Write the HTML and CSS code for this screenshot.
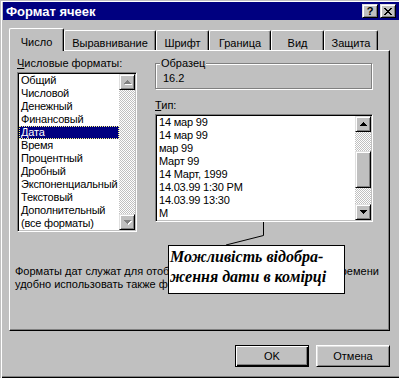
FILE: index.html
```html
<!DOCTYPE html>
<html lang="ru">
<head>
    <meta charset="UTF-8">
    <title>Формат ячеек</title>
    <link rel="stylesheet" href="styles.css">
</head>
<body>
    <div class="dialog">
        <div class="titlebar">
            <span class="title">Формат ячеек</span>
            <div class="title-buttons">
                <span class="title-btn help">?</span>
                <span class="title-btn">
                    <svg width="8" height="7" viewBox="0 0 8 7"><path d="M0 0h2v1h-2z M6 0h2v1h-2z M1 1h2v1h-2z M5 1h2v1h-2z M2 2h4v1h-4z M3 3h2v1h-2z M2 4h4v1h-4z M1 5h2v1h-2z M5 5h2v1h-2z M0 6h2v1h-2z M6 6h2v1h-2z"/></svg>
                </span>
            </div>
        </div>

        <div class="tabs">
            <div class="tab tab-number active">Число</div>
            <div class="tab tab-align">Выравнивание</div>
            <div class="tab tab-font">Шрифт</div>
            <div class="tab tab-border">Граница</div>
            <div class="tab tab-view">Вид</div>
            <div class="tab tab-protect">Защита</div>
        </div>

        <div class="panel">
            <div class="cols">
                <div class="col-left">
                    <div class="label"><u>Ч</u>исловые форматы:</div>
                    <div class="listbox formats">
                        <ul class="items">
                            <li>Общий</li>
                            <li>Числовой</li>
                            <li>Денежный</li>
                            <li>Финансовый</li>
                            <li class="sel">Дата</li>
                            <li>Время</li>
                            <li>Процентный</li>
                            <li>Дробный</li>
                            <li>Экспоненциальный</li>
                            <li>Текстовый</li>
                            <li>Дополнительный</li>
                            <li>(все форматы)</li>
                        </ul>
                        <div class="scrollbar disabled">
                            <div class="sb-btn"><svg width="7" height="4" viewBox="0 0 7 4"><path d="M3 0h1v1h-1z M2 1h3v1h-3z M1 2h5v1h-5z M0 3h7v1h-7z"/></svg></div>
                            <div class="sb-track"></div>
                            <div class="sb-btn"><svg width="7" height="4" viewBox="0 0 7 4"><path d="M0 0h7v1h-7z M1 1h5v1h-5z M2 2h3v1h-3z M3 3h1v1h-1z"/></svg></div>
                        </div>
                    </div>
                </div>

                <div class="col-right">
                    <fieldset class="sample">
                        <legend>Образец</legend>
                        <div class="sample-value">16.2</div>
                    </fieldset>
                    <div class="label"><u>Т</u>ип:</div>
                    <div class="listbox types">
                        <ul class="items">
                            <li>14 мар 99</li>
                            <li>14 мар 99</li>
                            <li>мар 99</li>
                            <li>Март 99</li>
                            <li>14 Март, 1999</li>
                            <li>14.03.99 1:30 PM</li>
                            <li>14.03.99 13:30</li>
                            <li>М</li>
                        </ul>
                        <div class="scrollbar">
                            <div class="sb-btn"><svg width="7" height="4" viewBox="0 0 7 4"><path d="M3 0h1v1h-1z M2 1h3v1h-3z M1 2h5v1h-5z M0 3h7v1h-7z"/></svg></div>
                            <div class="sb-track"><div class="sb-thumb"></div></div>
                            <div class="sb-btn"><svg width="7" height="4" viewBox="0 0 7 4"><path d="M0 0h7v1h-7z M1 1h5v1h-5z M2 2h3v1h-3z M3 3h1v1h-1z"/></svg></div>
                        </div>
                    </div>
                </div>
            </div>

            <p class="desc">Форматы дат служат для отображения даты и времени, а для времени<br>удобно использовать также форматы категории Время.</p>
        </div>

        <div class="buttons">
            <button class="btn default">OK</button>
            <button class="btn">Отмена</button>
        </div>

        <!-- выноска поверх диалога -->
        <svg class="leader" width="399" height="378">
            <polyline points="263.5,222 263.5,235.5 226,245" fill="none" stroke="#000" stroke-width="1"/>
        </svg>
        <div class="callout">Можливість відобра-<br>ження дати в комірці</div>
    </div>
</body>
</html>
```

FILE: styles.css
```css
/* Диалог "Формат ячеек" в стиле Windows 98 */
body {
    margin: 0;
    background-color: #c0c0c0;
    font-family: "Liberation Sans", Arial, sans-serif;
    font-size: 11px;
    line-height: 13px;
    color: #000;
}

.dialog {
    position: relative;
    width: 399px;
    height: 378px;
    box-sizing: border-box;
    padding: 2px 0 0 3px;
    background-color: #c0c0c0;
    box-shadow: inset 1px 1px 0 #c0c0c0, inset 2px 2px 0 #fff,
                inset 0 -1px 0 #000, inset 0 -2px 0 #808080;
    overflow: hidden;
}

/* заголовок */
.titlebar {
    height: 18px;
    background-color: #000080;
    color: #fff;
    display: flex;
    align-items: center;
    justify-content: space-between;
    padding: 0 3px 0 3px;
}

.title {
    font-weight: bold;
    font-size: 13px;
}

.title-buttons {
    display: flex;
    gap: 2px;
}

.title-btn {
    width: 16px;
    height: 14px;
    box-sizing: border-box;
    display: flex;
    align-items: center;
    justify-content: center;
    background-color: #c0c0c0;
    color: #000;
    border: 1px solid;
    border-color: #dfdfdf #000 #000 #dfdfdf;
    box-shadow: inset 1px 1px 0 #fff, inset -1px -1px 0 #808080;
}

.title-btn.help {
    font-weight: bold;
    font-size: 11px;
}

/* вкладки */
.tabs {
    position: relative;
    z-index: 1;
    display: flex;
    align-items: flex-end;
    height: 22px;
    margin: 8px 0 0 6px;
}

.tab {
    height: 20px;
    box-sizing: border-box;
    padding-top: 6px;
    text-align: center;
    border: 1px solid #fff;
    border-right-color: #000;
    border-bottom: none;
    border-radius: 2px 2px 0 0;
    box-shadow: inset -1px 0 0 #808080;
    white-space: nowrap;
}

.tab.active {
    height: 23px;
    margin-bottom: -1px;
    padding-top: 7px;
    background-color: #c0c0c0;
}

.tab-number { width: 55px; }
.tab-align { width: 92px; }
.tab-font { width: 53px; }
.tab-border { width: 62px; }
.tab-view { width: 53px; }
.tab-protect { width: 54px; }

.panel {
    width: 381px;
    height: 281px;
    box-sizing: border-box;
    margin-left: 6px;
    padding: 6px 0 0 7px;
    border: 1px solid;
    border-color: #fff #000 #000 #fff;
    box-shadow: inset -1px -1px 0 #808080;
}

.cols {
    display: flex;
    align-items: flex-start;
    gap: 18px;
}

.col-left {
    width: 120px;
}

.col-right {
    width: 218px;
}

.label {
    height: 13px;
    margin-bottom: 2px;
    white-space: nowrap;
}

/* группа "Образец" */
.sample {
    width: 217px;
    box-sizing: border-box;
    margin: 0 0 10px;
    padding: 2px 0 3px 7px;
    border: 1px solid #808080;
    box-shadow: inset 1px 1px 0 #fff, 1px 1px 0 #fff;
}

.sample legend {
    margin-left: -3px;
    padding: 0 1px;
    background-color: #c0c0c0;
    line-height: 13px;
}

.sample-value {
    height: 13px;
}

/* списки */
.listbox {
    display: flex;
    box-sizing: border-box;
    padding: 1px;
    background-color: #fff;
    border: 1px solid;
    border-color: #808080 #fff #fff #808080;
    box-shadow: inset 1px 1px 0 #000, inset -1px -1px 0 #c0c0c0;
}

.listbox.formats {
    height: 160px;
}

.listbox.types {
    height: 108px;
}

.items {
    flex: 1;
    margin: 0;
    padding: 0;
    list-style: none;
    overflow: hidden;
}

.items li {
    height: 13px;
    padding-left: 2px;
    letter-spacing: -0.2px;
    white-space: nowrap;
}

.items li.sel {
    background-color: #000080;
    color: #fff;
    outline: 1px dotted #ffff80;
    outline-offset: -1px;
}

.scrollbar {
    width: 16px;
    display: flex;
    flex-direction: column;
}

.sb-btn,
.sb-thumb {
    box-sizing: border-box;
    background-color: #c0c0c0;
    border: 1px solid;
    border-color: #dfdfdf #000 #000 #dfdfdf;
    box-shadow: inset 1px 1px 0 #fff, inset -1px -1px 0 #808080;
}

.sb-btn {
    height: 16px;
    display: flex;
    align-items: center;
    justify-content: center;
}

.sb-btn svg {
    fill: #000;
}

.scrollbar.disabled .sb-btn svg {
    fill: #808080;
    filter: drop-shadow(1px 1px 0 #fff);
}

.sb-track {
    flex: 1;
    padding-top: 19px;
    background-color: #fff;
    background-image: conic-gradient(#c0c0c0 25%, #fff 0 50%, #c0c0c0 0 75%, #fff 0);
    background-size: 2px 2px;
}

.sb-thumb {
    height: 37px;
}

.desc {
    margin: 33px 0 0 -2px;
    white-space: nowrap;
}

/* кнопки */
.buttons {
    display: flex;
    justify-content: flex-end;
    gap: 7px;
    width: 381px;
    margin: 14px 0 0 6px;
}

.btn {
    width: 74px;
    height: 22px;
    box-sizing: border-box;
    padding: 0;
    font-family: inherit;
    font-size: 11px;
    color: #000;
    background-color: #c0c0c0;
    border: 1px solid;
    border-color: #fff #000 #000 #fff;
    box-shadow: inset 1px 1px 0 #dfdfdf, inset -1px -1px 0 #808080;
}

.btn.default {
    border-color: #000;
    box-shadow: inset 1px 1px 0 #fff, inset -1px -1px 0 #000, inset -2px -2px 0 #808080;
}

/* выноска */
.leader {
    position: absolute;
    left: 0;
    top: 0;
    pointer-events: none;
}

.callout {
    position: absolute;
    left: 168px;
    top: 245px;
    width: 177px;
    height: 49px;
    box-sizing: border-box;
    padding: 1px 0 0 1px;
    background-color: #fff;
    border: 1px solid #000;
    font-family: "Liberation Serif", "Times New Roman", serif;
    font-weight: bold;
    font-style: italic;
    font-size: 16px;
    line-height: 20px;
    white-space: nowrap;
}
```
